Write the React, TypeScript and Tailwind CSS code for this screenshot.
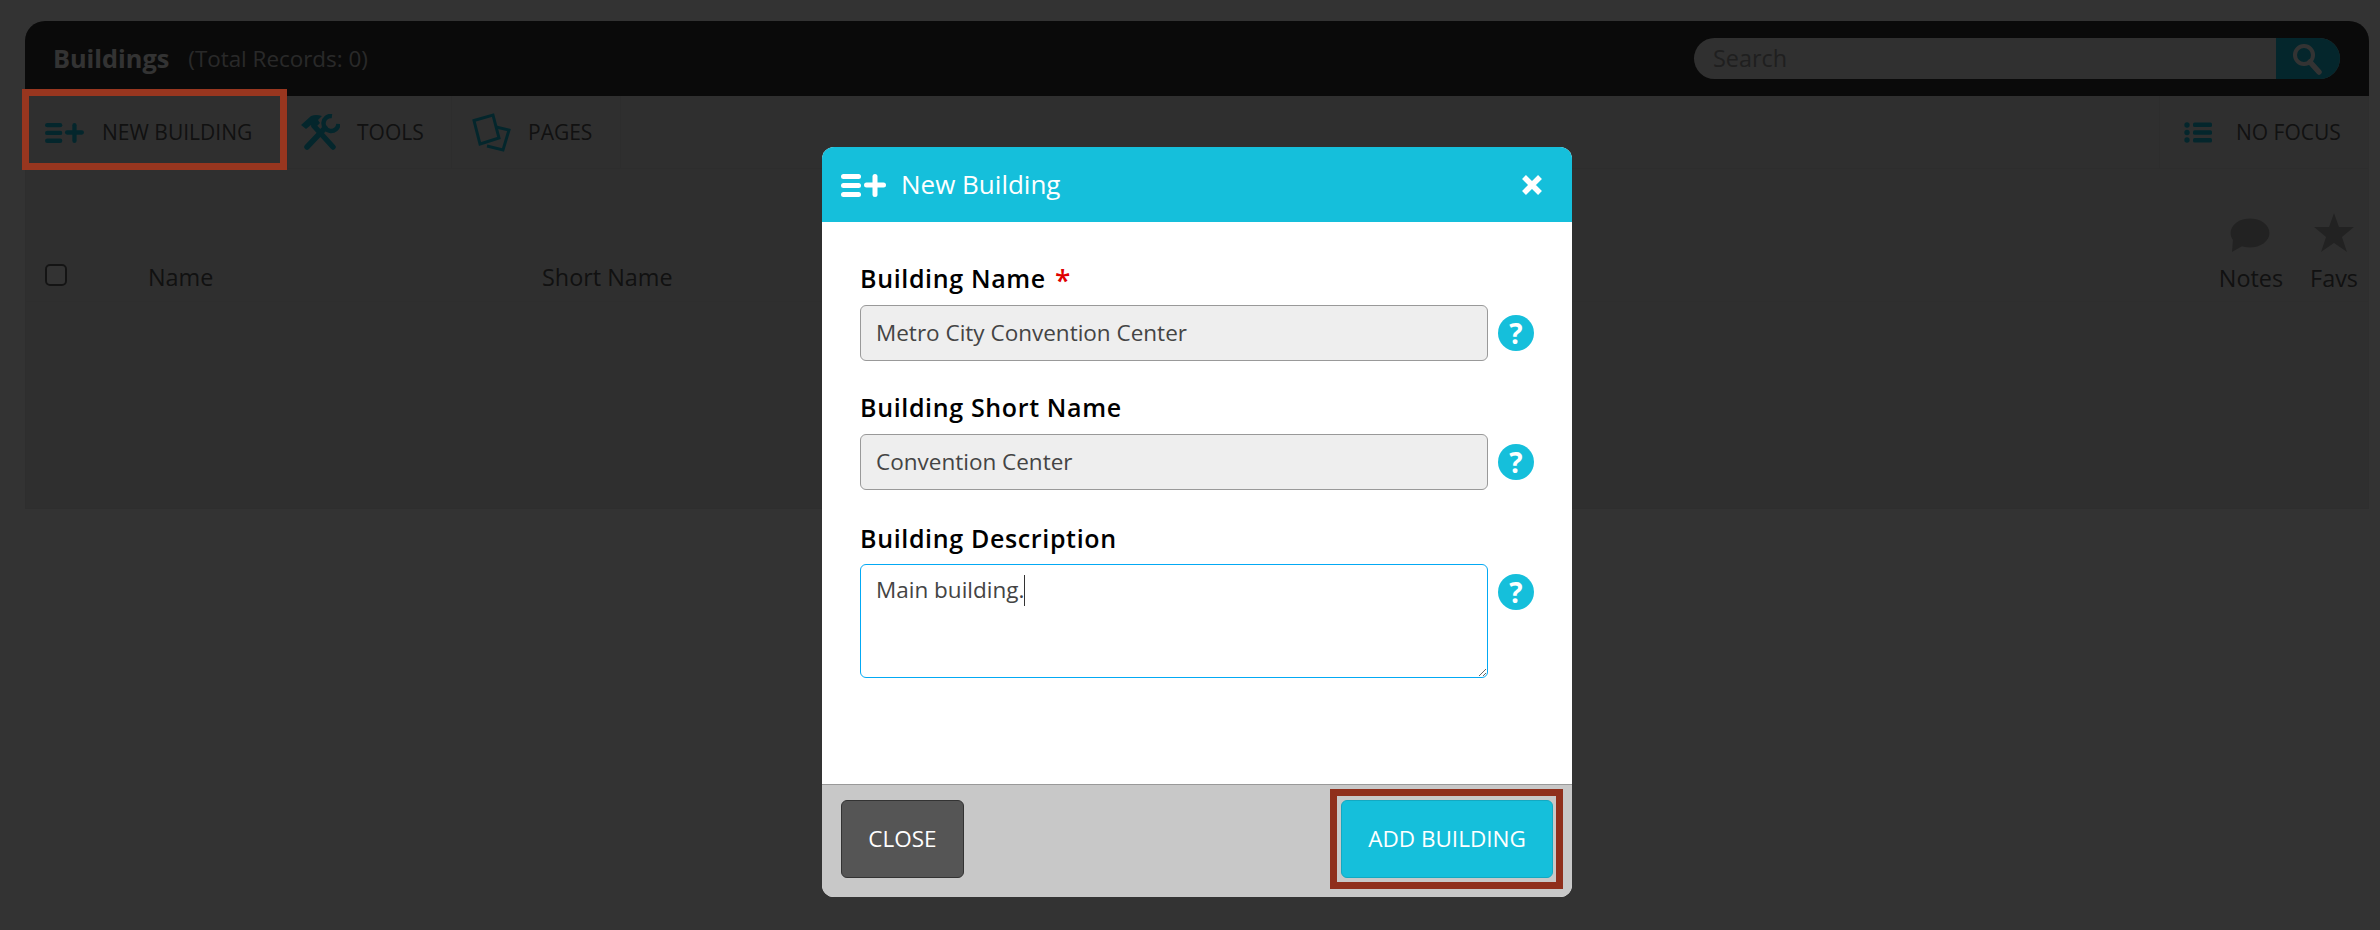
const ListPlusIcon = ({ className }: { className: string }) => (
  <svg viewBox="0 0 45 24" className={className} fill="currentColor">
    <rect x="0" y="1" width="20" height="5" rx="2.5" />
    <rect x="0" y="10" width="20" height="5" rx="2.5" />
    <rect x="0" y="19" width="20" height="5" rx="2.5" />
    <rect x="23" y="9.5" width="22" height="5" rx="2.5" />
    <rect x="31.5" y="1" width="5" height="23" rx="2.5" />
  </svg>
);

const ToolsIcon = () => (
  <svg viewBox="0 0 40 36" className="h-[36px] w-[40px] text-[#15bfdb]" fill="none">
    <path d="M1 11 L11 2 Q16 0 22 2 L18 6 L20 9 L14 15 L11 11 L6 15 Z" fill="currentColor" />
    <path d="M14 12 L33 33" stroke="currentColor" strokeWidth="5.5" strokeLinecap="round" />
    <path d="M7 33 L25 14" stroke="currentColor" strokeWidth="5.5" strokeLinecap="round" />
    <path d="M32 2 A7.5 7.5 0 1 0 38.5 10" stroke="currentColor" strokeWidth="4.5" />
  </svg>
);

const PagesIcon = () => (
  <svg viewBox="0 0 39 39" className="h-[39px] w-[39px] text-[#15bfdb]" fill="none" stroke="currentColor" strokeWidth="3">
    <path d="M2 7.5 L21 2 L27 25 L8 31 Z" />
    <path d="M24 14 L37 17 L31 37 L15 33" />
  </svg>
);

const ListIcon = () => (
  <svg viewBox="0 0 28 21" className="h-[21px] w-[28px] text-[#15bfdb]" fill="currentColor">
    <circle cx="3" cy="3" r="2.7" />
    <circle cx="3" cy="10.5" r="2.7" />
    <circle cx="3" cy="18" r="2.7" />
    <rect x="9" y="0.5" width="19" height="4.5" rx="1.5" />
    <rect x="9" y="8.2" width="19" height="4.5" rx="1.5" />
    <rect x="9" y="16" width="19" height="4.5" rx="1.5" />
  </svg>
);

const HelpIcon = () => (
  <div className="flex h-[36px] w-[36px] shrink-0 items-center justify-center rounded-full bg-[#15bfdb] text-[28px] leading-none font-bold text-white">
    ?
  </div>
);

const fieldClass = "h-[56px] w-[628px] rounded-[6px] border border-[#999] bg-[#eee] px-[15px] pb-[1px] text-[22.5px] text-[#444]";
const labelClass = "h-[34px] text-[25px] leading-[34px] font-semibold tracking-[0.65px] text-black";

export default function App() {
  return (
    <div className="relative h-[930px] w-[2380px] overflow-hidden bg-white font-['Open_Sans',sans-serif]">
      <div className="pt-[21px] pr-[11px] pl-[25px]">
        <div className="h-[488px] rounded-t-[20px] border border-t-0 border-[#e4e4e4] bg-[#ebebeb]">
          <div className="-mx-px flex h-[75px] items-center justify-between rounded-t-[20px] bg-[#323232] pr-[29px] pl-[28px]">
            <div className="flex items-center">
              <span className="text-[25.3px] font-bold text-white">Buildings</span>
              <span className="ml-[19px] text-[22.4px] text-[#ccc]">(Total Records: 0)</span>
            </div>
            <div className="flex h-[41px] w-[646px] overflow-hidden rounded-full bg-[#eee]">
              <input placeholder="Search" className="min-w-0 flex-1 bg-transparent pl-[19px] text-[23.4px] placeholder:text-[#999]" />
              <div className="flex w-[64px] items-center justify-center bg-[#15bfdb] text-white">
                <svg viewBox="0 0 30 32" className="mr-[2px] h-[32px] w-[30px]" fill="none" stroke="currentColor">
                  <circle cx="12" cy="12" r="9" strokeWidth="4" />
                  <path d="M18 19 L27 29" strokeWidth="5.5" strokeLinecap="round" />
                </svg>
              </div>
            </div>
          </div>

          <div className="flex h-[73px] justify-between border-b border-[#e0e0e0] text-[21px] font-medium text-[#555]">
            <div className="flex">
              <div className="flex w-[262px] items-center border-r border-[#e0e0e0] pl-[19px]">
                <ListPlusIcon className="h-[21px] w-[39px] text-[#15bfdb]" />
                <span className="mt-[2px] ml-[18px]">NEW BUILDING</span>
              </div>
              <div className="flex w-[164px] items-center gap-[17px] border-r border-[#e0e0e0] pl-[12px]">
                <ToolsIcon />
                <span className="mt-[2px]">TOOLS</span>
              </div>
              <div className="flex w-[169px] items-center gap-[17px] border-r border-[#e0e0e0] pl-[20px]">
                <PagesIcon />
                <span className="mt-[2px]">PAGES</span>
              </div>
            </div>
            <div className="flex w-[209px] items-center gap-[24px] border-l border-[#e0e0e0] pl-[24px]">
              <ListIcon />
              <span className="mt-[2px]">NO FOCUS</span>
            </div>
          </div>

          <div className="relative flex h-[133px] items-end border-b border-[#e4e4e4] pb-[6px] text-[23.4px] text-[#555]">
            <div className="mb-[9px] ml-[19px] h-[22px] w-[22px] rounded-[5px] border-2 border-[#666] bg-white" />
            <span className="ml-[81px] w-[394px]">Name</span>
            <span>Short Name</span>
            <div className="ml-auto mb-[2px] flex items-end gap-[27px] pr-[10px]">
              <div className="flex flex-col items-center gap-[11px]">
                <svg viewBox="0 0 40 34" className="mr-[2px] h-[34px] w-[40px] text-[#aaa]" fill="currentColor">
                  <ellipse cx="20" cy="15" rx="19.5" ry="14.5" />
                  <path d="M3 20 L2 34 L16 26 Z" />
                </svg>
                <span className="leading-[30px]">Notes</span>
              </div>
              <div className="flex flex-col items-center gap-[11px]">
                <svg viewBox="0 0 40 39" className="h-[39px] w-[40px] text-[#aaa]" fill="currentColor">
                  <path d="M20 0 L25 14 L40 14 L28 24 L33 39 L20 30 L7 39 L12 24 L0 14 L15 14 Z" />
                </svg>
                <span className="leading-[30px]">Favs</span>
              </div>
            </div>
          </div>
        </div>
      </div>

      <div className="absolute inset-0 bg-black/80 pt-[147px] pl-[822px]">
        <div className="flex h-[750px] w-[750px] flex-col overflow-hidden rounded-[12px] bg-white">
          <div className="flex h-[75px] shrink-0 items-center bg-[#15bfdb] pr-[30px] pl-[19px] text-white">
            <ListPlusIcon className="h-[24px] w-[45px]" />
            <span className="ml-[15px] text-[26px]">New Building</span>
            <svg viewBox="0 0 20 20" className="ml-auto h-[20px] w-[20px]" stroke="currentColor" strokeWidth="5.5">
              <path d="M2 2 L18 18 M18 2 L2 18" />
            </svg>
          </div>

          <div className="flex-1 pt-[39px] pl-[38px]">
            <div className={labelClass}>
              Building Name <span className="ml-[2px] align-[-3px] text-[28px] leading-none text-[#e00000]">*</span>
            </div>
            <div className="mt-[10px] flex items-center gap-[10px]">
              <input defaultValue="Metro City Convention Center" className={fieldClass} />
              <HelpIcon />
            </div>

            <div className={`${labelClass} mt-[29px]`}>Building Short Name</div>
            <div className="mt-[10px] flex items-center gap-[10px]">
              <input defaultValue="Convention Center" className={fieldClass} />
              <HelpIcon />
            </div>

            <div className={`${labelClass} mt-[31px]`}>Building Description</div>
            <div className="mt-[9px] flex items-start gap-[10px]">
              <div className="relative">
                <textarea
                  defaultValue="Main building."
                  className="block h-[114px] w-[628px] rounded-[6px] border border-[#03a9f4] bg-white px-[15px] py-[8px] text-[22.5px] text-[#444] outline-none"
                />
                <div className="absolute top-[11px] left-[164px] h-[31px] w-px bg-[#333]" />
              </div>
              <div className="mt-[10px]">
                <HelpIcon />
              </div>
            </div>
          </div>

          <div className="flex h-[113px] shrink-0 items-start justify-between border-t border-[#999] bg-[#c8c8c8] pt-[15px] pr-[19px] pl-[19px] text-[22.5px] font-medium text-white">
            <button className="h-[78px] w-[123px] rounded-[6px] border border-[#333] bg-[#555]">CLOSE</button>
            <button className="h-[78px] w-[212px] rounded-[6px] border border-[#12a9c2] bg-[#15bfdb]">ADD BUILDING</button>
          </div>
        </div>
      </div>

      <div className="absolute top-[89px] left-[22px] h-[81px] w-[265px] border-[7px] border-[#98361f]" />
      <div className="absolute top-[789px] left-[1330px] h-[100px] w-[233px] border-[7px] border-[#8f2f1c]" />
    </div>
  );
}
